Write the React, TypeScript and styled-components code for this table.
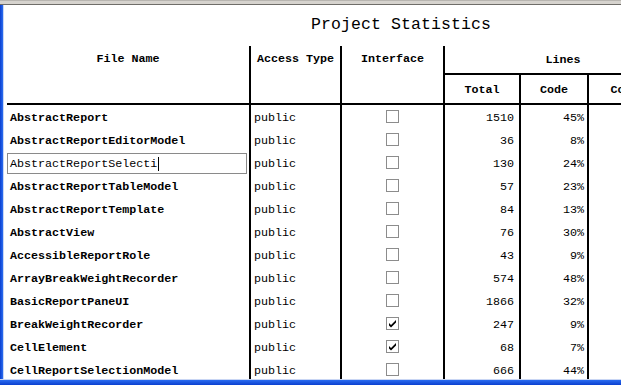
import React, { FC } from 'react';
import styled, { createGlobalStyle } from 'styled-components';

const GlobalStyle = createGlobalStyle`
  html, body {
    margin: 0;
    padding: 0;
    background: #ffffff;
    overflow: hidden;
  }
`;

const MONO = `'Liberation Mono', 'DejaVu Sans Mono', monospace`;

const Frame = styled.div`
  width: 621px;
  height: 385px;
  display: flex;
  flex-direction: column;
  overflow: hidden;
  background: #ffffff;
`;

const TopBar = styled.div`
  flex-shrink: 0;
  height: 3px;
  background: #d6d3ce;
  border-top: 1px solid #b8b5b0;
  border-bottom: 1px solid #6f6d69;
`;

const Middle = styled.div`
  flex: 1;
  display: flex;
  min-height: 0;
`;

const LeftEdge = styled.div`
  flex-shrink: 0;
  width: 3px;
  background: linear-gradient(90deg, #0b3fcf, #2a6cf0);
  border-right: 1px solid #c9d6f4;
`;

const BottomBar = styled.div`
  flex-shrink: 0;
  height: 5px;
  border-top: 1px solid #c9d6f4;
  background: linear-gradient(180deg, #2a6cf0, #0b3fcf);
`;

const Sheet = styled.div`
  flex: 1;
  min-width: 0;
  overflow: hidden;
  padding-left: 3px;
  font-family: ${MONO};
  color: #000000;
`;

const Title = styled.div`
  height: 41px;
  width: 788px;
  display: flex;
  align-items: center;
  justify-content: center;
  font-size: 16.5px;
  letter-spacing: 0.1px;
  padding-bottom: 2px;
  box-sizing: border-box;
`;

const COLUMNS = '244px 91px 103px 76px 68px 94px';

const Head = styled.div`
  display: grid;
  grid-template-columns: ${COLUMNS};
  grid-template-rows: 29px 28px;
  width: max-content;
  border-bottom: 2px solid #000000;
`;

const HeadCell = styled.div<{ $rows?: number; $cols?: number; $under?: boolean }>`
  grid-row: span ${(p) => p.$rows ?? 1};
  grid-column: span ${(p) => p.$cols ?? 1};
  display: flex;
  justify-content: center;
  align-items: ${(p) => (p.$rows === 2 ? 'flex-start' : 'center')};
  padding-top: ${(p) => (p.$rows === 2 ? '6px' : '1px')};
  border-right: 2px solid #000000;
  border-bottom: ${(p) => (p.$under ? '2px solid #000000' : 'none')};
  font-size: 11.7px;
  font-weight: bold;
  white-space: nowrap;
  box-sizing: border-box;
`;

const Row = styled.div`
  display: grid;
  grid-template-columns: ${COLUMNS};
  height: 23px;
  width: max-content;
`;

const Cell = styled.div<{ $align?: 'left' | 'center' | 'right'; $bold?: boolean; $pad?: number }>`
  display: flex;
  align-items: center;
  justify-content: ${(p) =>
    p.$align === 'right' ? 'flex-end' : p.$align === 'center' ? 'center' : 'flex-start'};
  padding: 2px ${(p) => p.$pad ?? 3}px 0;
  border-right: 2px solid #000000;
  font-size: 11.7px;
  font-weight: ${(p) => (p.$bold ? 'bold' : 'normal')};
  white-space: nowrap;
  overflow: hidden;
  box-sizing: border-box;
`;

const EditCell = styled.div`
  display: flex;
  align-items: center;
  padding: 1px 2px 0 0;
  border-right: 2px solid #000000;
  box-sizing: border-box;
`;

const Editor = styled.div`
  width: 240px;
  height: 21px;
  display: flex;
  align-items: center;
  padding: 1px 0 0 2px;
  border: 1px solid #8a8a8a;
  box-sizing: border-box;
  font-size: 11.7px;
  white-space: nowrap;
`;

const Caret = styled.span`
  display: inline-block;
  width: 1px;
  height: 14px;
  background: #000000;
  margin-left: 1px;
`;

const Box = styled.span`
  width: 13px;
  height: 13px;
  box-sizing: border-box;
  border: 1px solid #8c8c8c;
  background: #ffffff;
  display: flex;
  align-items: center;
  justify-content: center;
  margin-top: -3px;
`;

const CheckBox: FC<{ checked: boolean }> = ({ checked }) => (
  <Box>
    {checked ? (
      <svg width="9" height="9" viewBox="0 0 9 9">
        <path d="M1 4 L3 6 L8 1 L8 3.5 L3 8.5 L1 6.5 Z" fill="#000000" />
      </svg>
    ) : null}
  </Box>
);

type FileRow = {
  name: string;
  access: string;
  iface: boolean;
  total: number;
  code: string;
  editing?: boolean;
};

const rows: FileRow[] = [
  { name: 'AbstractReport', access: 'public', iface: false, total: 1510, code: '45%' },
  { name: 'AbstractReportEditorModel', access: 'public', iface: false, total: 36, code: '8%' },
  { name: 'AbstractReportSelecti', access: 'public', iface: false, total: 130, code: '24%', editing: true },
  { name: 'AbstractReportTableModel', access: 'public', iface: false, total: 57, code: '23%' },
  { name: 'AbstractReportTemplate', access: 'public', iface: false, total: 84, code: '13%' },
  { name: 'AbstractView', access: 'public', iface: false, total: 76, code: '30%' },
  { name: 'AccessibleReportRole', access: 'public', iface: false, total: 43, code: '9%' },
  { name: 'ArrayBreakWeightRecorder', access: 'public', iface: false, total: 574, code: '48%' },
  { name: 'BasicReportPaneUI', access: 'public', iface: false, total: 1866, code: '32%' },
  { name: 'BreakWeightRecorder', access: 'public', iface: true, total: 247, code: '9%' },
  { name: 'CellElement', access: 'public', iface: true, total: 68, code: '7%' },
  { name: 'CellReportSelectionModel', access: 'public', iface: false, total: 666, code: '44%' },
];

const App = () => (
  <>
    <GlobalStyle />
    <Frame>
      <TopBar />
      <Middle>
        <LeftEdge />
        <Sheet>
          <Title>Project Statistics</Title>
          <Head>
            <HeadCell $rows={2}>File Name</HeadCell>
            <HeadCell $rows={2}>Access Type</HeadCell>
            <HeadCell $rows={2}>Interface</HeadCell>
            <HeadCell $cols={3} $under>Lines</HeadCell>
            <HeadCell>Total</HeadCell>
            <HeadCell>Code</HeadCell>
            <HeadCell>Comment</HeadCell>
          </Head>
          {rows.map((r) => (
            <Row key={r.name}>
              {r.editing ? (
                <EditCell>
                  <Editor>
                    {r.name}
                    <Caret />
                  </Editor>
                </EditCell>
              ) : (
                <Cell $bold>{r.name}</Cell>
              )}
              <Cell>{r.access}</Cell>
              <Cell $align="center">
                <CheckBox checked={r.iface} />
              </Cell>
              <Cell $align="right" $pad={5}>{r.total}</Cell>
              <Cell $align="right" $pad={3}>{r.code}</Cell>
              <Cell />
            </Row>
          ))}
        </Sheet>
      </Middle>
      <BottomBar />
    </Frame>
  </>
);

export default App;
